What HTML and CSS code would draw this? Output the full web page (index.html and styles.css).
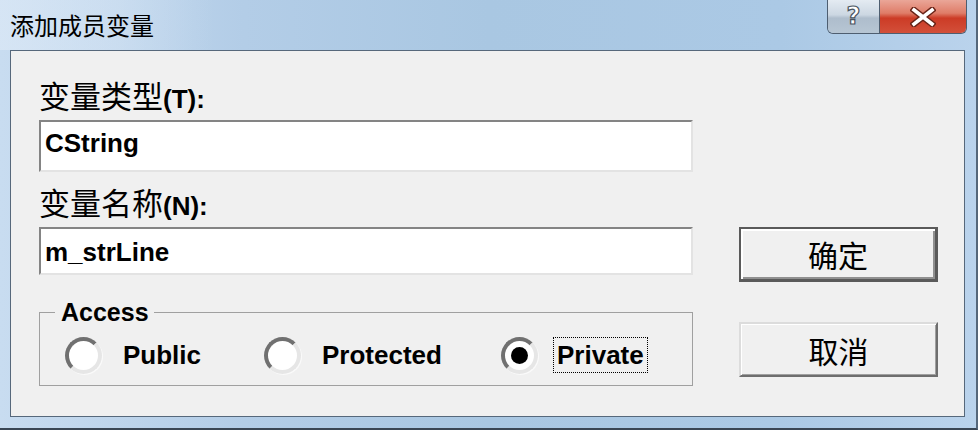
FILE: index.html
```html
<!DOCTYPE html>
<html lang="zh-CN">
<head>
<meta charset="utf-8">
<title>添加成员变量</title>
<link rel="stylesheet" href="styles.css">
</head>
<body>
<div class="window">
  <div class="titlebar">
    <span class="title">添加成员变量</span>
    <div class="caption-buttons">
      <div class="cap-btn cap-help"><span class="help-glyph">?</span></div>
      <div class="cap-btn cap-close">
        <svg width="26" height="20" viewBox="0 0 26 20">
          <path d="M4 3 L22 17 M22 3 L4 17" stroke="#6a2418" stroke-width="6.5" stroke-linecap="square" fill="none"/>
          <path d="M4 3 L22 17 M22 3 L4 17" stroke="#ffffff" stroke-width="3.6" stroke-linecap="square" fill="none"/>
        </svg>
      </div>
    </div>
  </div>
  <div class="client">
    <div class="form-col">
      <div class="field-label label-type"><span class="cjk">变量类型</span><span class="latin">(T):</span></div>
      <div class="edit edit-type">CString</div>
      <div class="field-label label-name"><span class="cjk">变量名称</span><span class="latin">(N):</span></div>
      <div class="edit edit-name">m_strLine</div>
      <fieldset class="group">
        <legend class="group-title">Access</legend>
        <div class="radio-row">
          <div class="option"><span class="radio"></span><span class="opt-text">Public</span></div>
          <div class="option"><span class="radio"></span><span class="opt-text">Protected</span></div>
          <div class="option"><span class="radio checked"></span><span class="opt-text focus">Private</span></div>
        </div>
      </fieldset>
    </div>
    <div class="button-col">
      <div class="push default">确定</div>
      <div class="push">取消</div>
    </div>
  </div>
</div>
</body>
</html>
```
FILE: styles.css
```css
html, body {
  margin: 0;
  padding: 0;
}
body {
  width: 978px;
  height: 430px;
  overflow: hidden;
  background: #c4daef;
}
.window {
  width: 978px;
  height: 430px;
  box-sizing: border-box;
  display: flex;
  flex-direction: column;
  background: linear-gradient(90deg, #c8dcf0 0%, #b3cde7 25%, #a9c7e2 50%, #abc9e5 80%, #bad3ec 100%);
  border-right: 2px solid #55677a;
  border-bottom: 2px solid #3a4654;
}
.titlebar {
  height: 50px;
  flex: none;
  display: flex;
  align-items: flex-start;
  background: linear-gradient(90deg, rgba(225,236,248,0.55) 0%, rgba(225,236,248,0.35) 12%, rgba(225,236,248,0) 22%);
}
.title {
  font-family: "Noto Sans CJK SC", sans-serif;
  font-size: 24px;
  line-height: 50px;
  color: #000;
  padding-left: 10px;
}
.caption-buttons {
  margin-left: auto;
  margin-right: 9px;
  display: flex;
  height: 34px;
  border: 1px solid #4e5e70;
  border-top: none;
  border-radius: 0 0 6px 6px;
  overflow: hidden;
  box-sizing: border-box;
}
.cap-btn {
  height: 33px;
  display: flex;
  align-items: center;
  justify-content: center;
}
.cap-help {
  width: 51px;
  background: linear-gradient(180deg, #e4ebf2 0%, #ccd7e2 45%, #aebdcc 55%, #b7c6d4 100%);
  border-right: 1px solid #4e5e70;
}
.help-glyph {
  font-family: "DejaVu Sans", sans-serif;
  font-weight: bold;
  font-size: 24px;
  line-height: 24px;
  color: #fff;
  -webkit-text-stroke: 1.2px #4a5460;
  margin-top: -1px;
}
.cap-close {
  width: 86px;
  background: linear-gradient(180deg, #eaa698 0%, #df7c68 40%, #cc3b26 55%, #d3503a 100%);
}
.client {
  flex: none;
  height: 367px;
  margin: 0 11px 0 10px;
  box-sizing: border-box;
  border: 1px solid #56687b;
  background: #f0f0f0;
  display: flex;
}
.form-col {
  width: 654px;
  margin-left: 28px;
  padding-top: 27px;
  display: flex;
  flex-direction: column;
}
.field-label {
  height: 34px;
  line-height: 34px;
  white-space: nowrap;
  color: #000;
}
.cjk {
  font-family: "Noto Sans CJK SC", sans-serif;
  font-size: 31px;
  font-weight: normal;
}
.latin {
  font-family: "Liberation Sans", sans-serif;
  font-size: 26px;
  font-weight: bold;
}
.label-name {
  margin-top: 13px;
}
.edit {
  margin-top: 8px;
  box-sizing: border-box;
  background: #fff;
  border: 2px solid;
  border-color: #848484 #e3e3e3 #e3e3e3 #848484;
  font-family: "Liberation Sans", sans-serif;
  font-weight: bold;
  font-size: 26px;
  line-height: 30px;
  padding-left: 4px;
  color: #000;
}
.edit-type {
  height: 52px;
  padding-top: 6px;
}
.edit-name {
  height: 48px;
  padding-top: 8px;
}
.group {
  margin: 24px 0 0 0;
  padding: 0;
  border: 1px solid #a0a0a0;
  box-sizing: border-box;
  min-width: 0;
}
.group-title {
  margin-left: 15px;
  padding: 0 5px 0 6px;
  font-family: "Liberation Sans", sans-serif;
  font-weight: bold;
  font-size: 25px;
  line-height: 26px;
  color: #000;
}
.radio-row {
  height: 60px;
  display: grid;
  grid-template-columns: 199px 237px 1fr;
  align-items: center;
  padding-left: 25px;
}
.option {
  display: flex;
  align-items: center;
}
.radio {
  width: 37px;
  height: 37px;
  flex: none;
  box-sizing: border-box;
  border-radius: 50%;
  background: #fff;
  border: 4px solid;
  border-color: #707070 #e6e6e6 #e6e6e6 #707070;
  box-shadow: 1px 1px 0 #fafafa;
  display: flex;
  align-items: center;
  justify-content: center;
}
.radio.checked::after {
  content: "";
  width: 17px;
  height: 17px;
  border-radius: 50%;
  background: #000;
}
.opt-text {
  font-family: "Liberation Sans", sans-serif;
  font-weight: bold;
  font-size: 26px;
  line-height: 34px;
  color: #000;
  margin-left: 21px;
}
.opt-text.focus {
  margin-left: 15px;
  padding: 0 3px 0 3px;
  border: 1px dotted #000;
}
.button-col {
  margin-left: 46px;
  padding-top: 176px;
  display: flex;
  flex-direction: column;
  gap: 40px;
}
.push {
  width: 199px;
  height: 55px;
  box-sizing: border-box;
  background: #f0f0f0;
  display: flex;
  align-items: center;
  justify-content: center;
  font-family: "Noto Sans CJK SC", sans-serif;
  font-size: 30px;
  color: #000;
  border: 2px solid;
  border-color: #dcdcdc #6e6e6e #6e6e6e #dcdcdc;
  box-shadow: inset 1px 1px 0 #ffffff, inset -1px -1px 0 #a0a0a0;
}
.push.default {
  border: 2px solid #5a5a5a;
  border-right-width: 3px;
  border-bottom-width: 3px;
  box-shadow: inset 2px 2px 0 #ffffff, inset -2px -2px 0 #909090;
}
```
